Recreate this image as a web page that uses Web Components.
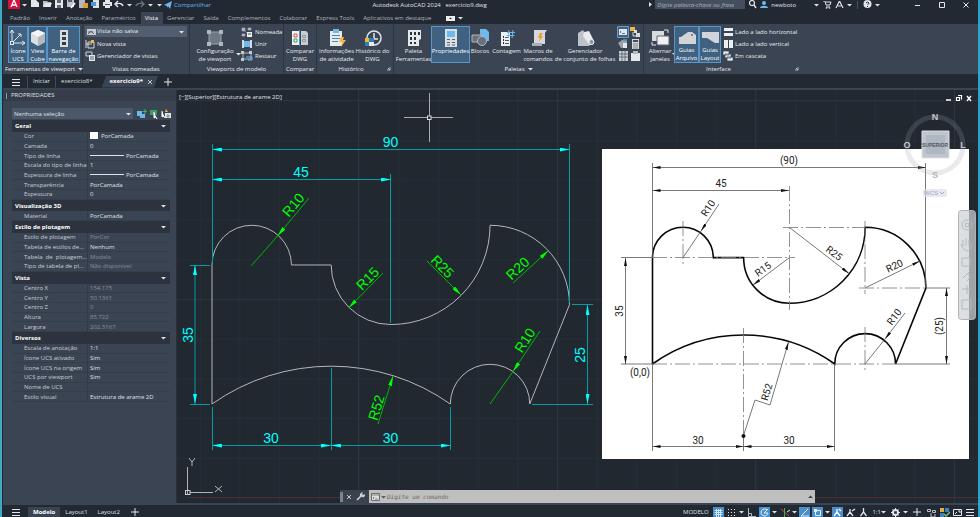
<!DOCTYPE html>
<html lang="pt-BR">
<head>
<meta charset="utf-8">
<title>Autodesk AutoCAD 2024 - exercicio9.dwg</title>
<style>
html,body{margin:0;height:100%;background:#222933;overflow:hidden}
</style>
</head>
<body>
<acad-window></acad-window>
<script>
const BASE = `*{box-sizing:border-box}button,a,input,select{font:inherit;color:inherit;margin:0;padding:0;border:0;background:none;text-decoration:none;white-space:nowrap;text-align:inherit}`;
const define = (name, css, html) => customElements.define(name, class extends HTMLElement {
  connectedCallback() {
    if (this.shadowRoot) return;
    this.attachShadow({ mode: 'open' }).innerHTML = `<style>${BASE}${css}</style>${typeof html === 'function' ? html(this) : html}`;
  }
});

/* name: [width, height, markup] */
const L = '#e4e7ea', B = '#6cb9ee';
const ICONS = {
  ucs: [18,18,`<path d="M3 1v13h13M3 14L12 5M1 4l2-3 2 3M13 12l3 2-3 2M9 5h3v3" fill="none" stroke="${L}"/><rect x="1.500" y="12.500" width="3" height="3" fill="#40617f" stroke="${L}"/>`],
  cube: [18,18,`<path d="M9 1l7 3v9l-7 4-7-4V4z" fill="#dcdfe2"/><path d="M9 8l7-4v9l-7 4z" fill="#b4b9bf"/><path d="M9 8L2 4l7-3 7 3z" fill="#f4f5f6"/>`],
  navbar: [18,18,`<path d="M5 1h8v17H5z" fill="#dadde0"/><path d="M7 3h4v3H7zM7 8h4v3H7zM7 13h4v3H7z" fill="#333b46"/>`],
  viewport: [18,18,`<path d="M3 3h12v12H3z" fill="#6e7784" stroke="#9ba2ab"/><path d="M1 1h4v4H1zM13 1h4v4h-4zM1 13h4v4H1zM13 13h4v4h-4z" fill="#b1b6bd"/>`],
  compare: [18,18,`<path d="M1 2h7v14H1z" fill="#f0f0f0"/><path d="M10 2h5l2 2v12h-7z" fill="#c9ccd0"/><path d="M8.500 1v16" stroke="#4a93c7"/><path d="M3 5h3v3H3z" fill="none" stroke="#e05252"/><path d="M3 10h3v3H3z" fill="none" stroke="#3fa35a"/><path d="M11.500 6.500h3v2h-3zM11.500 10.500h3v2h-3z" fill="none" stroke="#8f969e"/>`],
  activity: [18,18,`<path d="M2 2h12v15H2z" fill="#e8eaec"/><path d="M5 0h6v4H5z" fill="#7fb8dc"/><path d="M4 6.500h8M4 9.500h8M4 12.500h6" stroke="#4689b8"/><path d="M13 8h3l-1 3h3l-5 7 1-5h-3z" fill="#f4b942"/>`],
  history: [18,18,`<circle cx="10" cy="9" r="7" fill="none" stroke="${L}" stroke-width="1.500"/><path d="M10 4v6h4" fill="none" stroke="${L}" stroke-width="1.500"/><path d="M1 9h9v8H1z" fill="#2f7fbd"/><path d="M1 9h4v4H1z" fill="#f0b93c"/><path d="M5 13h5v4H5z" fill="#e8eaec"/>`],
  toolpal: [18,18,`<path d="M3 1h13v9l-2 1v6H3z" fill="#e6e8ea"/><path d="M5 3h2v3H5zM9 3h2v3H9zM13 3h2v3h-2zM5 8h2v3H5zM9 8h2v3H9zM5 13h2v2H5zM9 13h2v2H9z" fill="#2b323c"/>`],
  props: [18,18,`<path d="M3 0h12v18H3z" fill="#dcdfe1"/><path d="M5 2h8v6H5z" fill="${B}"/><path d="M5 10.500h3M5 13.500h3M5 16h3M10 10.500h3M10 13.500h3M10 16h3" stroke="#59626e"/>`],
  blocks: [18,18,`<path d="M9 0h6l3 3v9H9z" fill="${B}"/><path d="M1 6h10v7H1z" fill="#67717e" stroke="#b3b8bf"/><circle cx="11" cy="12" r="4.500" fill="#67717e" stroke="#b3b8bf"/>`],
  count: [18,18,`<path d="M3 3h9v14H3z" fill="#eceeef"/><path d="M5 8h1M5 11h1M5 14h1" stroke="#2b323c" stroke-width="2"/><path d="M7 8.500h4M7 11.500h4M7 14.500h4" stroke="#4c5662"/><path d="M11 1l-1 8M15 1l-1 8M9 3.500h8M8.500 6.500h8" stroke="${B}"/>`],
  macro: [18,18,`<path d="M5 1h13l-2 3v11H5z" fill="#d6d9dc"/><path d="M3 14h10v3H3z" fill="#aab0b7"/><path d="M11 4h3l-2 3h2l-4 6 1-4H9z" fill="#f09a2d"/>`],
  sheets: [20,18,`<path d="M3 4l5-3 8 13-2 3H3z" fill="#bfc3c8"/><path d="M9 3l5-1 5 10a3 3 0 0 1-5 3L8 7z" fill="#e8eaec"/><circle cx="16.500" cy="13" r="2.500" fill="#8f969f" stroke="#e8eaec"/>`],
  switchw: [20,18,`<path d="M2 2h12v10H2z" fill="#d9dcdf"/><path d="M7 7h12v9H7z" fill="#eff0f1" stroke="#5d6773"/><path d="M14 1h4v3M2 13v3h4" fill="none" stroke="${L}"/>`],
  filetab: [18,14,`<path d="M1 13V6h2l7-5h4l4 3v9z" fill="#d1d5d9"/><circle cx="14" cy="4" r="1" fill="#667"/>`],
  laytab: [18,14,`<path d="M1 1h17v11h-4L6 7H1z" fill="#d1d5d9"/>`],
  named: [12,10,`<path d="M1 1h3v3H1zM7 1h3v2H7zM1 7h3v2H1zM3 3l3 3" fill="#aeb4bb" stroke="#aeb4bb" stroke-width=".6"/><path d="M6 5h5v5H6z" fill="#eceeef"/><path d="M7 7h3" stroke="#555"/>`],
  join: [12,10,`<path d="M1 1h2v8H1zM9 1h2v8H9z" fill="#d5d8dc"/><path d="M3 2h6v6H3z" fill="${B}"/>`],
  restore: [12,10,`<path d="M2 2h8v6H2z" fill="none" stroke="#aeb4bb"/><path d="M0 0h3v3H0zM8 0h3v3H8zM0 7h3v3H0z" fill="#c5c9ce"/><path d="M5 6h6v3H7" stroke="${B}" fill="none"/>`],
  viewpic: [10,8,`<path d="M1 1h9v6H1z" fill="#c9cdd2"/><path d="M2 4h5M2 6l3-3 3 3" stroke="#59636f" fill="none"/>`],
  newview: [10,10,`<path d="M3 3h6v6H3z" fill="none" stroke="#d5d8dc"/><path d="M1 1v8M1 5h6" stroke="#d5d8dc"/><path d="M6 1h3v3H6z" fill="#f0b93c"/>`],
  viewmgr: [10,10,`<path d="M1 1h6v4H1z" fill="none" stroke="#d5d8dc"/><path d="M4 4h6v6H4z" fill="#e4e7ea"/><path d="M5 6h4M5 8h4" stroke="#59636f"/>`],
  cmd: [12,12,`<path d="M.5.500h11v11H.5z" fill="#40617f" stroke="#5b9fd3"/><path d="M2 3h8v6H2z" fill="#e4e7ea"/><path d="M3 5l1 1-1 1M5 7.500h3" stroke="#444" fill="none" stroke-width=".7"/>`],
  dbl: [12,12,`<path d="M1 1h5v4H1z" fill="#efb948"/><path d="M5 4h3v3H5zM7 7h4v4H7z" fill="#d9dcdf"/><path d="M4 6v4h3" stroke="#d9dcdf" fill="none"/>`],
  render: [12,12,`<path d="M1 5l4-3 5 1v6L4 10z" fill="#9aa2ab"/><path d="M6 5h4v5H6z" fill="#e4e7ea"/><path d="M6 2h4" stroke="${B}"/>`],
  calc: [12,12,`<path d="M3 1h7v10H3z" fill="#d4d7db"/><path d="M4 2h5v2H4z" fill="#454e5a"/><path d="M4 6h5M4 8h5M4 10h5" stroke="#6a737e" stroke-width=".8"/>`],
  sheet: [12,12,`<path d="M2 1h9v10H2z" fill="#c8ccd1"/><path d="M2 4h9M2 7h9M5 1v10M8 1v10" stroke="#4b5562" stroke-width=".7"/>`],
  clip: [12,12,`<path d="M2 3h9v8H2z" fill="#e4e7ea"/><path d="M4 1h5v3H4z" fill="#b5bac1"/>`],
  tileh: [10,10,`<path d="M1 1h9v3H1zM1 6h9v3H1z" fill="#eceef0"/>`],
  tilev: [10,10,`<path d="M1 1h4v8H1zM6 1h4v8H6z" fill="#eceef0"/>`],
  cascade: [10,10,`<path d="M0 0h6v4H0zM2 3h6v4H2zM4 6h6v4H4z" fill="#eceef0" stroke="#3b4453" stroke-width=".7"/>`],
  logo: [12,9,`<path d="M0 0h12v9H0z" fill="#d3123f"/><path d="M3 7L6 0l3 7M4 5h4" stroke="#fff" fill="none" stroke-width="1.300"/>`],
  doc: [10,9,`<path d="M1 0h5l3 3v4H1z" fill="${L}"/>`],
  open: [10,9,`<path d="M1 1h4l1 1h3v5H1z" fill="#b9bec5"/><path d="M3 3h7l-2 4H1z" fill="${L}"/>`],
  save: [10,9,`<path d="M1 0h8v8H1z" fill="${L}"/><path d="M3 0h4v3H3zM3 5h4v3H3z" fill="#606a77"/>`],
  saveas: [10,9,`<path d="M1 0h7v7H1z" fill="#bfc4ca"/><path d="M2 0h4v2H2z" fill="#555f6c"/><path d="M5 8l4-5" stroke="#fff" stroke-width="1.600"/>`],
  web: [10,9,`<path d="M1 0h6v8H1z" fill="#b3b9c0"/><path d="M5 3h5v5H5z" fill="#dc9d37"/>`],
  mobile: [10,9,`<path d="M3 0h6v8H3z" fill="#dfe2e5"/><path d="M1 2h5v4H1z" fill="#4d9bd2"/>`],
  print: [10,9,`<path d="M3 0h5v2H3zM1 2h9v4H1zM3 5h5v3H3z" fill="${L}"/><path d="M3 4.500h5" stroke="#555"/>`],
  undo: [10,9,`<path d="M9 6C8 3 5 3 2 4M4 1L1 4l3 3" fill="none" stroke="${L}" stroke-width="1.400"/>`],
  redo: [10,9,`<path d="M1 6c1-3 4-3 7-2M6 1l3 3-3 3" fill="none" stroke="#69717c" stroke-width="1.400"/>`],
  send: [8,8,`<path d="M0 4l8-4-2 8-2-3-1 2V5z" fill="${B}"/>`],
  search: [10,9,`<circle cx="5" cy="3" r="2.500" fill="none" stroke="${L}" stroke-width="1.200"/><path d="M7 5l2 3" stroke="${L}" stroke-width="1.400"/>`],
  user: [8,8,`<circle cx="4" cy="2" r="2" fill="${B}"/><path d="M0 7c0-3 8-3 8 0z" fill="${B}"/>`],
  cart: [9,8,`<path d="M0 0h2l1 4h4l1-3H3M3 6h4" fill="none" stroke="${L}"/><circle cx="3.500" cy="7" r=".8" fill="${L}"/><circle cx="6.500" cy="7" r=".8" fill="${L}"/>`],
  adsk: [9,8,`<path d="M1 7l3.500-7L8 7M3 5h3" fill="none" stroke="${L}" stroke-width="1.200"/>`],
  help: [9,9,`<circle cx="4.500" cy="4" r="4" fill="${L}"/><path d="M3 3q1.500-2 3 0q0 1-1.500 1.500M4.500 6v1" fill="none" stroke="#222933" stroke-width="1"/>`],
  min: [8,8,`<path d="M1 4.500h5" stroke="${L}"/>`],
  max: [8,8,`<path d="M1.500 1.500h5v5h-5z" fill="none" stroke="${L}"/>`],
  close: [8,8,`<path d="M1.500 1.500l5 5M6.500 1.500l-5 5" stroke="${L}"/>`],
  rest: [8,8,`<path d="M1.500 3.500h3v3h-3zM3 1.500h3.500v4" fill="none" stroke="#fff" stroke-width="1.200"/>`],
  minw: [8,8,`<path d="M1 6h5" stroke="#fff" stroke-width="1.500"/>`],
  closew: [8,8,`<path d="M2 2l4 5M6 2l-4 5" stroke="#fff" stroke-width="1.400"/>`],
  x: [6,6,`<path d="M1 1l4 4M5 1L1 5" stroke="#c4c9cf"/>`],
  menu: [10,8,`<path d="M1 1.500h8M1 4.500h8M1 7.500h8" stroke="${L}"/>`],
  plus: [8,8,`<path d="M4 0v8M0 4h8" stroke="${L}"/>`],
  down: [5,4,`<path d="M0 1h5L2.500 3.500z" fill="#dfe2e6"/>`],
  up: [5,4,`<path d="M0 3h5L2.500.500z" fill="#444"/>`],
  right: [4,5,`<path d="M1 0v5l3-2.500z" fill="#dfe2e6"/>`],
  corner: [4,4,`<path d="M1 1l2 2M3 0v3H0" stroke="#cfd3d8" fill="none" stroke-width=".8"/>`],
  pickadd: [10,10,`<path d="M0 2h5v5H0zM3 5h5v4H3z" fill="${B}"/><path d="M8 0v5M5.500 2.500h5" stroke="#43b36a"/>`],
  selobj: [10,10,`<path d="M1 1h7v5H1z" fill="#3f9d60"/><path d="M5 3v6l2-1 1 2" fill="#fff" stroke="#fff"/>`],
  quick: [10,10,`<path d="M1 2v6l2-1 1 2" stroke="#fff" fill="#fff"/><path d="M4 4h6v5H4z" fill="${L}"/><path d="M5 0l-1 3h3z" fill="#f0b93c"/><path d="M7 5v4M5 7h4" stroke="#555" stroke-width=".6"/>`],
  wrench: [9,9,`<path d="M1 8l4-4" fill="none" stroke="#cfd3d7" stroke-width="1.600"/><path d="M4 4q-1-3 3-4L6 2l1 1 2-1q0 4-3 3z" fill="#cfd3d7"/>`],
  prompt: [9,8,`<path d="M.5.500h8v7h-8z" fill="#ddd" stroke="#6d6d6d"/><path d="M.5 2h8M2 4l1 1-1 1M4 6h3" stroke="#6d6d6d" fill="none" stroke-width=".8"/>`],
  ribmin: [9,5,`<path d="M0 0h9v5H0z" fill="#eceef0"/><path d="M3 3h3L4.500 1.500z" fill="#222"/>`],
  grid: [11,11,`<path d="M0 0h11v11H0z" fill="#4a90cc"/><path d="M3.500 2v8M5.500 2v8M7.500 2v8M1.500 3.500h8M1.500 5.500h8M1.500 7.500h8" stroke="#dcebf6" stroke-width=".9"/>`],
  snap: [11,11,`<path d="M2 2.500h8M2 5.500h8M2 8.500h8" stroke="${L}" stroke-dasharray="1 2"/>`],
  ortho: [11,11,`<path d="M2.500 1v8.500H10M2.500 6.500h3v3" stroke="#b5bbc2" fill="none"/>`],
  polar: [11,11,`<path d="M0 0h11v11H0z" fill="#4a90cc"/><path d="M8 3a3.500 3.500 0 1 0 1 3H5l4-4" stroke="#e4eff8" fill="none"/>`],
  iso: [11,11,`<path d="M2 2l8 7" stroke="#c34c4c"/><path d="M5.500 1v9" stroke="#4fa85c"/><path d="M8 5l3-2" stroke="${L}"/>`],
  otrack: [11,11,`<path d="M0 0h11v11H0z" fill="#4a90cc"/><path d="M9 2L2 9h8" stroke="#e4eff8" fill="none"/>`],
  osnap: [11,11,`<path d="M0 0h11v11H0z" fill="#4a90cc"/><path d="M3.500 3.500h5v5h-5z" stroke="#e4eff8" fill="none"/><path d="M2 2h3v3H2z" fill="#e4eff8"/>`],
  anno1: [11,11,`<path d="M0 0h11v11H0z" fill="#4a90cc"/><path d="M5 2v3L2 9M5 5l3 4M7 2l2 2" stroke="#fff" fill="none" stroke-width="1.300"/>`],
  anno2: [11,11,`<path d="M5 2v3L2 9M5 5l3 4M7 4l3-2" stroke="${L}" fill="none" stroke-width="1.300"/>`],
  anno3: [11,11,`<path d="M5.500 1v4L2.500 9M5.500 5l3 4" stroke="${L}" fill="none" stroke-width="1.300"/>`],
  gear: [11,11,`<circle cx="5.500" cy="5.500" r="2.500" fill="none" stroke="${L}" stroke-width="2"/><path d="M5.500 1v9M1 5.500h9M2.500 2.500l1 1M8.500 2.500l-1 1M2.500 8.500l1-1M8.500 8.500l-1-1" stroke="${L}"/><circle cx="5.500" cy="5.500" r="1.300" fill="#222933"/>`],
  iso2: [11,11,`<path d="M1.500 2.500h3v2h-3zM6.500 3.500h3v2h-3zM5 6v4h4V7" fill="none" stroke="#b9bfc6"/>`],
  hw: [11,11,`<path d="M1 1h4v4H1z" fill="#e0ad3b"/><path d="M6 1h4v4H6zM1 6h4v4H1z" fill="#3b83bf"/><path d="M5 7l2 2 4-4" stroke="#6cc279" fill="none" stroke-width="1.500"/>`],
  clean: [11,11,`<path d="M1.500 2.500h8v6h-8z" fill="none" stroke="${L}"/><path d="M3 7l2-2M6 4h2v2" stroke="${L}" fill="none"/>`]
};
define('ui-icon', `:host{display:inline-flex;flex:none}svg{display:block}`, h => {
  const [w, ht, m] = ICONS[h.getAttribute('name')];
  return `<svg width="${w}" height="${ht}" viewBox="0 0 ${w} ${ht}" aria-hidden="true">${m}</svg>`;
});
const ic = n => `<ui-icon name="${n}"></ui-icon>`;
const bt = (n, label, w) => `<button aria-label="${label}" class="${w || n}">${ic(n)}</button>`;

/* Title bar */
define('title-bar', `:host{display:flex;align-items:center;height:9px;padding:0 0 0 5px;color:#e0e3e7}
button{display:flex;align-items:center;justify-content:center;width:12px}
.n{width:9px}.w{width:24px}
.share{width:auto;gap:2px;color:#62b7ee}
h1{flex:1;margin:0;font:inherit;text-align:center;white-space:pre}
input{width:90px;height:9px;background:#454e5d;padding:0 2px;font-style:italic;margin-left:3px;margin-right:1px}
input::placeholder{color:#abb2bc;opacity:1}
.who{width:auto;gap:3px;margin:0 16px 0 2px}
i{width:1px;height:8px;background:#4a5260;margin:0 3px}
.win{display:flex;margin-left:24px}`,
`${bt('logo','Menu do aplicativo')}${bt('down','Mais','n')}${['doc','open','save','saveas','web','mobile','print','undo'].map(n=>bt(n,n)).join('')}${bt('down','Desfazer','n')}${bt('redo','Refazer')}${bt('down','Refazer lista','n')}${bt('down','Personalizar','n')}
<button class="share">${ic('send')}Compartilhar</button>
<h1>Autodesk AutoCAD 2024   exercicio9.dwg</h1>
${ic('right')}<input type="search" aria-label="Pesquisar" placeholder="Digite palavra-chave ou frase">${bt('search','Pesquisar')}
<button class="who">${ic('user')}newboto</button>${bt('down','Conta','n')}${bt('cart','Loja')}${bt('adsk','Aplicativos')}${bt('down','Aplicativos lista','n')}<i></i>${bt('help','Ajuda')}${bt('down','Ajuda lista','n')}
<div class="win">${bt('min','Minimizar','w')}${bt('max','Maximizar','w')}${bt('close','Fechar','w')}</div>`);

/* Ribbon tabs */
define('ribbon-tabs', `:host{display:flex;align-items:stretch;height:12px;margin-top:3px;padding-left:3px;color:#aeb5bf}
nav{display:flex}
a{padding:0 5px 0 4px;line-height:12px}a[aria-current]{background:#3b4453;color:#fff}
button{display:flex;align-items:center;gap:3px;margin-left:10px}`,
`<nav>${['Padrão','Inserir','Anotação','Paramétrico','Vista','Gerenciar','Saída','Complementos','Colaborar','Express Tools','Aplicativos em destaque'].map(t=>`<a href="#"${t==='Vista'?' aria-current="page"':''}>${t}</a>`).join('')}</nav><button aria-label="Minimizar faixa">${ic('ribmin')}${ic('down')}</button>`);

/* Ribbon pieces */
define('ribbon-panel', `:host{display:flex;flex-direction:column;flex:none;padding:2px 2px 0;border-right:1px solid #2d3541}
.body{display:grid;grid-template-columns:var(--cols);height:38px;align-items:start}
.foot{display:flex;align-items:center;height:10px;gap:4px;line-height:10px;width:0;min-width:100%}
.foot span{flex:1;text-align:center}
.menu{justify-content:center;gap:3px}.menu span{flex:none}`,
h => `<div class="body"><slot></slot></div><div class="foot ${h.getAttribute('more')==='down'?'menu':''}"><span>${h.getAttribute('label')}</span>${h.hasAttribute('more')?ic(h.getAttribute('more')):''}</div>`);
define('ribbon-button', `:host{display:block;min-width:0}
button{position:relative;display:flex;flex-direction:column;align-items:center;width:100%;height:37px;padding-top:2px;text-align:center;line-height:8px;border:1px solid transparent}
:host([active]) button{background:#40617f;border-color:#5496c9;color:#fff}
.pic{height:18px;display:flex;align-items:center}
.more{position:absolute;right:-4px;bottom:6px;display:flex}`,
h => `<button${h.hasAttribute('active')?' aria-pressed="true"':''}><span class="pic">${ic(h.getAttribute('icon'))}</span><span><slot></slot></span>${h.hasAttribute('more')?`<span class="more">${ic('down')}</span>`:''}</button>`);
define('ribbon-list', `:host{display:grid;grid-auto-rows:12px;min-width:0}`, `<slot></slot>`);
define('ribbon-item', `:host{display:flex}
button{display:flex;align-items:center;gap:2px;line-height:12px}`,
h => `<button${h.title?` aria-label="${h.title}"`:''}>${ic(h.getAttribute('icon'))}<span><slot></slot></span></button>`);
define('view-select', `:host{display:flex;align-items:center;position:relative;height:11px;background:#525e6f}
ui-icon{margin-left:1px}select{appearance:none;flex:1;height:11px;line-height:11px;padding-left:1px;outline:0}.a{margin-right:3px}`,
`${ic('viewpic')}<select aria-label="Vista"><option>Vista não salva</option></select><span class="a">${ic('down')}</span>`);
define('ribbon-bar', `:host{display:flex;background:#3b4453;height:50px;color:#e9ebee;white-space:nowrap}`,
`<ribbon-panel label="Ferramentas de viewport" more="down" style="--cols:20px 19px 33px;padding-left:5px;padding-right:2px">
<ribbon-button icon="ucs" active>Ícone<br>UCS</ribbon-button><ribbon-button icon="cube" active>View<br>Cube</ribbon-button><ribbon-button icon="navbar" active>Barra de<br>navegação</ribbon-button></ribbon-panel>
<ribbon-panel label="Vistas nomeadas" style="--cols:102px"><ribbon-list><view-select></view-select><ribbon-item icon="newview">Nova vista</ribbon-item><ribbon-item icon="viewmgr">Gerenciador de vistas</ribbon-item></ribbon-list></ribbon-panel>
<ribbon-panel label="Viewports de modelo" style="--cols:46px 43px"><ribbon-button icon="viewport" more>Configuração<br>de viewport</ribbon-button><ribbon-list style="padding-left:3px"><ribbon-item icon="named">Nomeada</ribbon-item><ribbon-item icon="join">Unir</ribbon-item><ribbon-item icon="restore">Restaur</ribbon-item></ribbon-list></ribbon-panel>
<ribbon-panel label="Comparar" style="--cols:28px"><ribbon-button icon="compare">Comparar<br>DWG</ribbon-button></ribbon-panel>
<ribbon-panel label="Histórico" more="corner" style="--cols:35px 37px"><ribbon-button icon="activity">Informações<br>de atividade</ribbon-button><ribbon-button icon="history">Histórico do<br>DWG</ribbon-button></ribbon-panel>
<ribbon-panel label="Paletas" more="down" style="--cols:35px 39px 20px 33px 30px 64px 12px 12px">
<ribbon-button icon="toolpal">Paleta<br>Ferramentas</ribbon-button><ribbon-button icon="props" active>Propriedades</ribbon-button><ribbon-button icon="blocks">Blocos</ribbon-button><ribbon-button icon="count">Contagem</ribbon-button><ribbon-button icon="macro">Macros de<br>comandos</ribbon-button><ribbon-button icon="sheets">Gerenciador<br>de conjunto de folhas</ribbon-button>
<ribbon-list><ribbon-item icon="cmd" title="Linha de comando"></ribbon-item><ribbon-item icon="render" title="Renderização"></ribbon-item><ribbon-item icon="sheet" title="Tabela"></ribbon-item></ribbon-list>
<ribbon-list><ribbon-item icon="dbl" title="Marcas"></ribbon-item><ribbon-item icon="calc" title="Calculadora"></ribbon-item><ribbon-item icon="clip" title="Gerenciador de marcações"></ribbon-item></ribbon-list></ribbon-panel>
<ribbon-panel label="Interface" more="corner" style="--cols:28px 25px 22px 78px;border-right:0"><ribbon-button icon="switchw" more>Alternar<br>janelas</ribbon-button><ribbon-button icon="filetab" active>Guias<br>Arquivo</ribbon-button><ribbon-button icon="laytab" active>Guias<br>Layout</ribbon-button><ribbon-list style="padding-left:2px"><ribbon-item icon="tileh">Lado a lado horizontal</ribbon-item><ribbon-item icon="tilev">Lado a lado vertical</ribbon-item><ribbon-item icon="cascade">Em cascata</ribbon-item></ribbon-list></ribbon-panel>`);

/* Document tabs */
define('doc-tabs', `:host{display:flex;align-items:center;height:14px;padding-left:8px;margin-top:1px;border-bottom:1px solid #3b4453;color:#dde0e4}
nav{display:flex;height:12px;line-height:11px}a{padding:0 5px;border-left:1px solid #434b57}
a:first-child{margin-left:6px}a[aria-current]{background:#3b4453;font-weight:700;display:flex;align-items:center;gap:4px;padding:0 5px 0 8px;margin-left:4px;color:#fff;border:0;clip-path:polygon(5px 0,100% 0,calc(100% - 4px) 100%,0 100%)}
button{display:flex}.p{margin-left:6px}`,
`<button aria-label="Menu de guias">${ic('menu')}</button><nav><a href="#">Iniciar</a><a href="#">exercicio8*</a><a href="#" aria-current="page">exercicio9*${ic('x')}</a></nav><button class="p" aria-label="Novo desenho">${ic('plus')}</button>`);

/* Properties palette */
const GROUPS = [
 ['Geral',[['Cor','PorCamada','swatch'],['Camada','0'],['Tipo de linha','PorCamada','line'],['Escala do tipo de linha','1'],['Espessura de linha','PorCamada','line'],['Transparência','PorCamada'],['Espessura','0']]],
 ['Visualização 3D',[['Material','PorCamada']]],
 ['Estilo de plotagem',[['Estilo de plotagem','PorCor','off'],['Tabela de estilos de...','Nenhum'],['Tabela  de  plotagem...','Modelo','off'],['Tipo de tabela de pl...','Não disponível','off']]],
 ['Vista',[['Centro X','154.175','off'],['Centro Y','50.1361','off'],['Centro Z','0','off'],['Altura','85.722','off'],['Largura','202.3167','off']]],
 ['Diversos',[['Escala de anotação','1:1'],['Ícone UCS ativado','Sim'],['Ícone UCS na origem','Sim'],['UCS por viewport','Sim'],['Nome de UCS',''],['Estilo visual','Estrutura de arame 2D']]]];
define('props-palette', `:host{display:flex;flex-direction:column;width:174px;flex:none;background:#3b4453;color:#dfe2e6;border-right:1px solid #2a313c}
h2{margin:0;font:inherit;line-height:11px;height:11px;background:#353d4a;display:flex;align-items:center;gap:4px;padding-left:3px}
h2 i{width:1px;height:6px;background:#8b939e}
.pick{display:flex;align-items:center;gap:2px;margin:7px 5px 1px 9px;height:11px}
.sel{display:flex;align-items:center;flex:1;background:#4c586a;height:11px;padding-right:2px;margin-right:2px}
select{appearance:none;flex:1;padding-left:2px;height:11px;outline:0}
.pick button{display:flex}
table{border-spacing:0;table-layout:fixed;width:calc(100% - 15px);height:282px;margin:0 6px 0 9px;line-height:8px;white-space:pre}
th,td{padding:0;text-align:left;font-weight:400}
col.k{width:76px}
tr.h{height:11px}tr.h th{background:#2c333e;color:#fff;font-weight:700;padding-left:3px}
tr.h div{display:flex;align-items:center;justify-content:space-between;padding-right:4px}
tr.r{height:9px}tr.r th,tr.r td{border-bottom:1px solid #353d4a}
tr.r th{padding-left:12px;color:#c9ced4;border-right:1px solid #323a46}
td{padding-left:2px}td.off{color:#87909b}
.swatch:before{content:"";display:inline-block;width:8px;height:7px;background:#fff;margin-right:3px;vertical-align:-1px}
.line:before{content:"";display:inline-block;width:34px;height:1px;background:#dfe2e6;margin-right:2px;vertical-align:2px}`,
`<h2><i></i>PROPRIEDADES</h2><div class="pick"><label class="sel"><select aria-label="Seleção"><option>Nenhuma seleção</option></select>${ic('down')}</label>${bt('pickadd','Alternar PICKADD')}${bt('selobj','Selecionar objetos')}${bt('quick','Seleção rápida')}</div>
<table><colgroup><col class="k"><col></colgroup>${GROUPS.map(([g,rows])=>`<tbody><tr class="h"><th colspan="2"><div>${g}${ic('down')}</div></th></tr>${rows.map(([k,v,c])=>`<tr class="r"><th scope="row">${k}</th><td class="${c||''}">${v}</td></tr>`).join('')}</tbody>`).join('')}</table>`);

/* Drawing area. The profile is drawn in millimetres, y up. */
const PROFILE = 'M0 0V35A10 10 0 0 0 20 35H30A15 15 0 0 1 45 20A25 25 0 0 1 70 45A20 20 0 0 0 90 25L80 0A10 10 0 0 1 60 0A52 52 0 0 1 0 0';
const dim = (id,x1,y1,x2,y2,one) => `<path d="M${x1} ${y1}L${x2} ${y2}" ${one?'':`marker-start="url(#${id})"`} marker-end="url(#${id})"/>`;
const t = (x,y,s,r=0) => `<text transform="translate(${x} ${y}) rotate(${r})">${s}</text>`;
const arrow = (id,c,l,w) => `<marker id="${id}" orient="auto-start-reverse" markerUnits="userSpaceOnUse" markerWidth="${l}" markerHeight="${w}" refX="${l}" refY="${w/2}"><path d="M0 0L${l} ${w/2}L0 ${w}z" fill="${c}" stroke="none"/></marker>`;
define('cad-drawing', `:host{display:block;width:100%;height:100%}svg{display:block;width:100%;height:100%}
.cad text{font:14px "Liberation Sans",Arial,sans-serif;text-anchor:middle}
.sheet text{font:10px Roboto,sans-serif;text-anchor:middle;fill:#222}`,
`<svg role="img" aria-label="Desenho exercicio9"><defs>${arrow('c','#00ffff',10,4)}${arrow('g','#00ff00',10,4)}${arrow('k','#111',8,3)}
<pattern id="minor" width="39.700" height="39.700" patternUnits="userSpaceOnUse" x="358.500" y="100.500"><path d="M.5 0V40M0 .5H40" stroke="#252d37" fill="none"/></pattern></defs>
<g transform="translate(-177 -90)" fill="none">
<rect x="177" y="90" width="1600" height="1000" fill="url(#minor)"/>
<path d="M358.500 90V503M557.500 90V503M755.500 90V503M954.500 90V503M177 100.500H980M177 299.500H980" stroke="#2c3440"/><path d="M188 497.500H980" stroke="#4f2d35"/>
<g class="cad">
 <path d="${PROFILE}" transform="translate(212 404) scale(3.972 -3.972)" stroke="#b4b7bb" vector-effect="non-scaling-stroke"/>
 <g stroke="#009ea3">${dim('c',212,149.5,569.5,149.5)+dim('c',212,179.5,391,179.5)+dim('c',195,265,195,404)+dim('c',587.5,305,587.5,404)+dim('c',212,445.5,331,445.5)+dim('c',331,445.5,450.5,445.5)}
 <path d="M212.500 144V263M569.500 144V303M390.500 174V323M190 265.500H210M190 404.500H210M572 304.500H593M532 404.500H593M212.500 407V450M331.500 368V450M450.500 407V450"/></g>
 <g stroke="#00b400">${dim('g',309,198,277.5,236,1)+dim('g',383,273,348.5,308,1)+dim('g',427,261,461,295,1)+dim('g',513,283,548.5,250.5,1)+dim('g',540,331,513,371.5,1)+dim('g',378,424,393,376,1)}<path d="M277.500 236L251.500 265.500M513 371.500L490 404"/></g>
 <g fill="#00ffff">${t(390.5,147,'90')}${t(301,177,'45')}${t(271,443,'30')}${t(390.5,443,'30')}${t(192.5,335,'35',-90)}${t(584.5,355,'25',-90)}</g>
 <g fill="#00ff00">${t(297,208,'R10',-50)}${t(371,282,'R15',-45)}${t(439,270,'R25',45)}${t(521,272,'R20',-43)}${t(529,343,'R10',-57)}${t(381,409,'R52',-73)}</g>
</g>
<path d="M404 117.500H453M429.500 93V142" stroke="#a6a9ad"/><rect x="427.500" y="116" width="3.500" height="3.500" fill="#212830" stroke="#ddd"/>
<path d="M187.500 467V495M190 492.500H213" stroke="#b0b4b9"/><rect x="185.500" y="490.500" width="4.500" height="4" stroke="#c8cbd0"/><path d="M189 458l3 4 3-4M192 462v4M215 486l7 6M222 486l-7 6" stroke="#b0b4b9"/>
<g class="sheet"><rect x="602" y="149" width="367" height="310" fill="#fff"/>
 <path d="${PROFILE}" transform="translate(652.500 364) scale(3.038 -3.038)" stroke="#080808" stroke-width="1.600" vector-effect="non-scaling-stroke"/>
 <g stroke="#555" stroke-width=".8">${dim('k',652.5,167.5,926,167.5)+dim('k',652.5,190.5,789,190.5)+dim('k',625.5,258,625.5,364)+dim('k',946.5,288,946.5,364)+dim('k',652.5,446.5,743.5,446.5)+dim('k',743.5,446.5,834.5,446.5)+dim('k',789.5,227.5,849,273.5,1)+dim('k',789.5,257.5,753,285,1)+dim('k',865,288,920,261,1)+dim('k',719,204,701,231,1)+dim('k',905,313,885,339,1)+dim('k',770,405,788.5,342,1)}
 <path d="M701 231L683 257.500M885 339L865 364M770 405L755 400L743.500 435.500M652.500 163V258M652.500 364V451M925.500 163V288M743.500 436V451M834.500 364V451M621 257.500H652M621 364H652M896 364H950M926 288H950"/></g>
 <path d="M683 221V264M783 227.500H865M865 221V294M859 288H926M652 257.500H795M789.500 186V310M743.500 328V435M652 364H896M865 327V370" stroke="#777" stroke-width=".8" stroke-dasharray="15 3 2 3"/>
 <circle cx="743.500" cy="436" r="2" fill="#111"/>
 ${t(789,164,'(90)')}${t(721,187,'45')}${t(711,210,'R10',-57)}${t(765,272,'R15',-36)}${t(832,256,'R25',37)}${t(896,269,'R20',-25)}${t(897,319,'R10',-53)}${t(622.5,311,'35',-90)}${t(942.5,326,'(25)',-90)}${t(640,375.5,'(0,0)')}${t(698,444,'30')}${t(789,444,'30')}${t(770,393,'R52',-73)}
</g></g></svg>`);
define('view-cube', `:host{display:block}svg{display:block}text{font:bold 9px "Liberation Sans",sans-serif;text-anchor:middle;fill:#c4c7ca}.s{fill:#b2b5b9}.t{font:bold 5px "Liberation Sans",sans-serif;fill:#4e555e}.w{font-size:6px;font-weight:400;fill:#a4a7bd}`,
`<svg width="66" height="90" role="img" aria-label="ViewCube"><circle cx="33" cy="34" r="28" fill="none" stroke="#9aa0a8" stroke-opacity=".22" stroke-width="5"/><path d="M20 20h27v27H20z" fill="#c0c5cd" stroke="#dcdfe3"/><path d="M24 24h19v19H24z" fill="#a8b0bd" opacity=".7"/><text class="t" x="33" y="36">SUPERIOR</text><text x="33" y="9">N</text><text x="5" y="37">O</text><text x="61" y="37">L</text><text class="s" x="33" y="67">S</text><rect x="21" y="78" width="24" height="8" rx="2" fill="#dedeed" opacity=".7"/><text class="w" x="29" y="84">WCS</text><path d="M38 81l2 2 2-2" fill="none" stroke="#a4a7bd"/></svg>`);
define('nav-bar', `:host{display:block}svg{display:block}`,
`<svg width="18" height="110" aria-label="Barra de navegação" role="img"><rect x=".5" y=".5" width="17" height="109" rx="3" fill="#cfd2d5" fill-opacity=".72" stroke="#adb1b5"/><g fill="none" stroke="#b5b9bd"><circle cx="9" cy="15" r="5"/><circle cx="9" cy="15" r="2"/><path d="M5 36v-6M8 36v-8M11 36v-7M13 34v5q-4 4-8-1l-2-4M4 48h8v8H4zM5 68l7-7M9 63q5 4 0 8M4 79h9M9 75v9M4 90h9v9H4z"/></g><circle cx="15" cy="3" r="1" fill="#999"/><circle cx="14" cy="106" r="1.500" fill="none" stroke="#999"/></svg>`);
define('command-line', `:host{display:flex;align-items:center;height:13px;background:#3a424d}
.g{width:3px;height:10px;background:#7c838c;margin-right:3px}button{display:flex}.k{margin:0 4px}
label{display:flex;align-items:center;flex:1;gap:1px;height:13px;background:#bfbfbf;padding:0 2px}
input{flex:1;font:italic 6px "DejaVu Sans Mono","Liberation Mono",monospace;outline:0}input::placeholder{color:#6b6b6b;opacity:1}.d{display:flex;filter:brightness(.4)}`,
`<span class="g"></span>${bt('x','Fechar')}<button class="k" aria-label="Personalizar">${ic('wrench')}</button><label>${ic('prompt')}<span class="d">${ic('down')}</span><input aria-label="Comando" placeholder="Digite um comando">${ic('up')}</label>`);
define('cad-canvas', `:host{display:block;position:relative;flex:1;min-width:0;background:#212830;overflow:hidden;color:#e2e5e8}
.lab{position:absolute;left:2px;top:3px;line-height:9px;white-space:nowrap}
.win{position:absolute;right:5px;top:4px;display:flex;gap:2px}.win button{display:flex}
view-cube{position:absolute;right:10px;top:21px}nav-bar{position:absolute;right:2px;top:120px}
command-line{position:absolute;left:163px;right:163px;bottom:0}`,
`<cad-drawing></cad-drawing><span class="lab">[−][Superior][Estrutura de arame 2D]</span><div class="win">${bt('minw','Minimizar')}${bt('rest','Restaurar')}${bt('closew','Fechar')}</div><view-cube></view-cube><nav-bar></nav-bar><command-line></command-line>`);

/* Status bar */
define('status-bar', `:host{display:flex;align-items:center;height:14px;padding:2px 3px 0 8px;border-top:2px solid #3b4453;color:#dde0e4}
nav{display:flex;flex:1;margin-left:7px}a{padding:0 5px;line-height:11px}a[aria-current]{background:#3b4453;font-weight:700;color:#fff}
button{display:flex;align-items:center}nav button{margin-left:6px}
.tools{display:flex;align-items:center;gap:2px;height:11px}.m{margin-right:2px}.s{margin:0 2px}.plus{margin:0 3px}`,
`<button aria-label="Menu de layouts">${ic('menu')}</button><nav><a href="#" aria-current="page">Modelo</a><a href="#">Layout1</a><a href="#">Layout2</a><button aria-label="Novo layout">${ic('plus')}</button></nav>
<div class="tools"><button class="m">MODELO</button>${['grid','snap','down','ortho','polar','down','iso','down','otrack','osnap','down','anno1','anno2','anno3'].map(n=>bt(n,n)).join('')}<button class="s">1:1 ${ic('down')}</button>${['gear','down','plus','iso2','hw','clean','menu'].map(n=>bt(n,n)).join('')}</div>`);

define('acad-window', `:host{display:flex;flex-direction:column;height:100vh;background:#222933;border-left:2px solid #3fa9c4;border-right:2px solid #2ba3cf;padding-left:1px;font:6px/8px "Open Sans","Noto Sans",sans-serif;color:#e0e3e7}
main{display:flex;flex:1;min-height:0;border-top:1px solid #3b4453}`,
`<title-bar></title-bar><ribbon-tabs></ribbon-tabs><ribbon-bar></ribbon-bar><doc-tabs></doc-tabs><main><props-palette></props-palette><cad-canvas></cad-canvas></main><status-bar></status-bar>`);
</script>
</body>
</html>
